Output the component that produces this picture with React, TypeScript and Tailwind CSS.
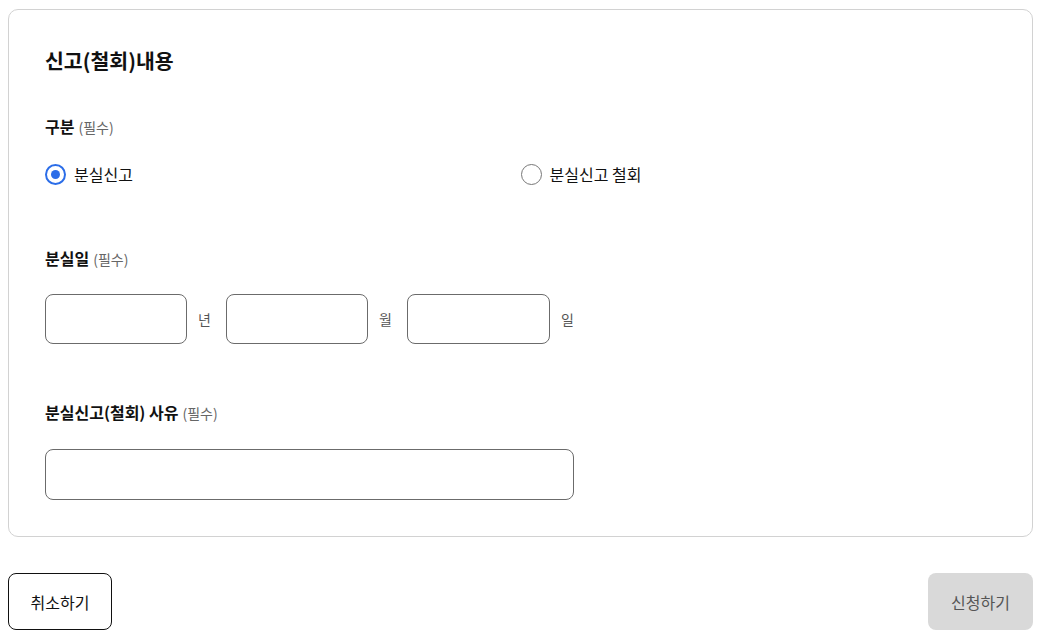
import React, { useState } from "react";

const font = { fontFamily: '"Noto Sans CJK KR", "Noto Sans", sans-serif' };

const FieldLabel: React.FC<{ text: string; className?: string }> = ({ text, className }) => (
  <div className={`flex items-baseline h-6 text-[16px] leading-6 font-bold ${className ?? ""}`}>
    {text}
    <span className="ml-1 text-[14px] leading-6 font-normal text-[#666]">(필수)</span>
  </div>
);

const Radio: React.FC<{ checked: boolean; label: string; onClick: () => void }> = ({ checked, label, onClick }) => (
  <label onClick={onClick} className="flex items-center gap-2 h-6 cursor-pointer">
    {checked ? (
      <span className="w-[21px] h-[21px] rounded-full border-2 border-[#2b6de8] flex items-center justify-center">
        <span className="w-[9px] h-[9px] rounded-full bg-[#2b6de8]" />
      </span>
    ) : (
      <span className="w-[21px] h-[21px] rounded-full border border-[#777]" />
    )}
    <span className="text-[16px] leading-6 text-[#111]">{label}</span>
  </label>
);

export default function App() {
  const [kind, setKind] = useState<"report" | "cancel">("report");

  return (
    <div style={font} className="w-[1041px] h-[638px] bg-white px-2 pt-[9px] text-[#111]">
      <div className="border border-[#d2d2d2] rounded-[10px] px-9 pt-[36px] pb-9">
        <h2 className="text-[20.5px] leading-7 font-bold">신고(철회)내용</h2>

        <FieldLabel text="구분" className="mt-10" />
        <div className="mt-[24px] grid grid-cols-2">
          <Radio checked={kind === "report"} label="분실신고" onClick={() => setKind("report")} />
          <Radio checked={kind === "cancel"} label="분실신고 철회" onClick={() => setKind("cancel")} />
        </div>

        <FieldLabel text="분실일" className="mt-[60px]" />
        <div className="mt-[24px] flex items-center h-[50px]">
          <input className="w-[142px] h-[50px] border border-[#6b6b6b] rounded-lg px-3 outline-none" />
          <span className="w-[39px] pl-[11px] text-[14px] text-[#555]">년</span>
          <input className="w-[142px] h-[50px] border border-[#6b6b6b] rounded-lg px-3 outline-none" />
          <span className="w-[39px] pl-[11px] text-[14px] text-[#555]">월</span>
          <input className="w-[143px] h-[50px] border border-[#6b6b6b] rounded-lg px-3 outline-none" />
          <span className="w-[39px] pl-[11px] text-[14px] text-[#555]">일</span>
        </div>

        <FieldLabel text="분실신고(철회) 사유" className="mt-[56px]" />
        <input className="mt-[25px] block w-[529px] h-[51px] border border-[#6b6b6b] rounded-lg px-3 outline-none" />
      </div>

      <div className="mt-9 flex justify-between">
        <button className="w-[104px] h-[57px] border border-[#111] rounded-lg text-[16px] text-[#111] bg-white">
          취소하기
        </button>
        <button disabled className="w-[105px] h-[57px] rounded-lg text-[16px] text-[#555] bg-[#d9d9d9]">
          신청하기
        </button>
      </div>
    </div>
  );
}
